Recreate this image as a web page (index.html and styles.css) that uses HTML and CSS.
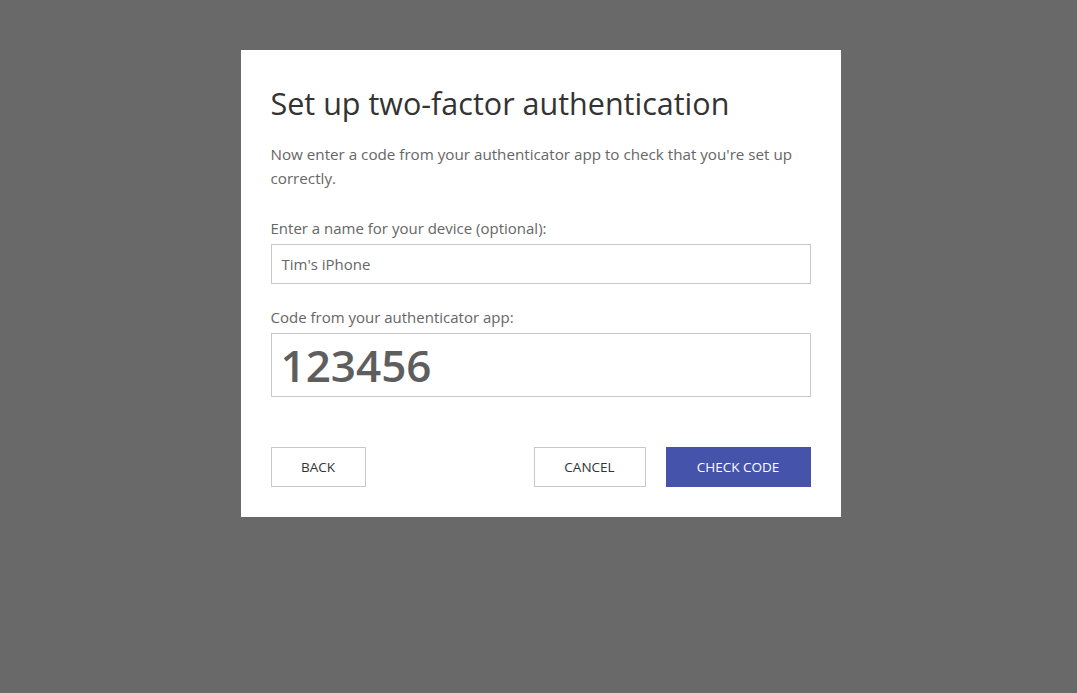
FILE: index.html
```html
<!DOCTYPE html>
<html>
<head>
<meta charset="utf-8">
<link rel="stylesheet" href="styles.css">
</head>
<body>
<div class="overlay">
  <div class="dialog">
    <h1 class="title">Set up two-factor authentication</h1>
    <p class="intro">Now enter a code from your authenticator app to check that you're set up correctly.</p>
    <div class="field first">
      <label class="label">Enter a name for your device (optional):</label>
      <div class="input">Tim's iPhone</div>
    </div>
    <div class="field">
      <label class="label">Code from your authenticator app:</label>
      <div class="input code">123456</div>
    </div>
    <div class="actions">
      <button class="btn">BACK</button>
      <div class="spacer"></div>
      <button class="btn cancel">CANCEL</button>
      <button class="btn primary">CHECK CODE</button>
    </div>
  </div>
</div>
</body>
</html>
```
FILE: styles.css
```css
html, body {
  margin: 0;
  padding: 0;
  height: 100%;
}
body {
  background: #696969;
  font-family: "Open Sans", "Noto Sans", sans-serif;
}
.overlay {
  display: flex;
  justify-content: center;
  padding-top: 50px;
}
.dialog {
  width: 540px;
  background: #fff;
  padding: 30px;
  margin-left: 4px;
}
.title {
  margin: 0;
  font-size: 30.5px;
  font-weight: 400;
  color: #333;
  line-height: 46px;
}
.intro {
  margin: 16px 0 0;
  font-size: 15.2px;
  line-height: 24px;
  color: #666;
}
.field {
  margin-top: 23px;
}
.field.first {
  margin-top: 28px;
}
.label {
  display: block;
  font-size: 15px;
  line-height: 20px;
  color: #666;
  margin-bottom: 6px;
}
.input {
  box-sizing: border-box;
  height: 40px;
  border: 1px solid #c8c8c8;
  padding: 0 10px;
  font-size: 15px;
  line-height: 38px;
  color: #666;
}
.input.code {
  height: 64px;
  font-size: 44px;
  line-height: 62px;
  font-weight: 600;
  color: #5e5e5e;
  padding-left: 9px;
}
.actions {
  display: flex;
  margin-top: 50px;
  gap: 20px;
}
.spacer {
  flex: 1;
}
.btn {
  height: 40px;
  box-sizing: border-box;
  border: 1px solid #c8c8c8;
  background: #fff;
  font-family: "Open Sans", "Noto Sans", sans-serif;
  font-size: 13.5px;
  color: #333;
  padding: 0;
  width: 95px;
}
.btn.cancel {
  width: 112px;
}
.btn.primary {
  width: 145px;
  background: #4553ab;
  border-color: #4553ab;
  color: #fff;
}
```
